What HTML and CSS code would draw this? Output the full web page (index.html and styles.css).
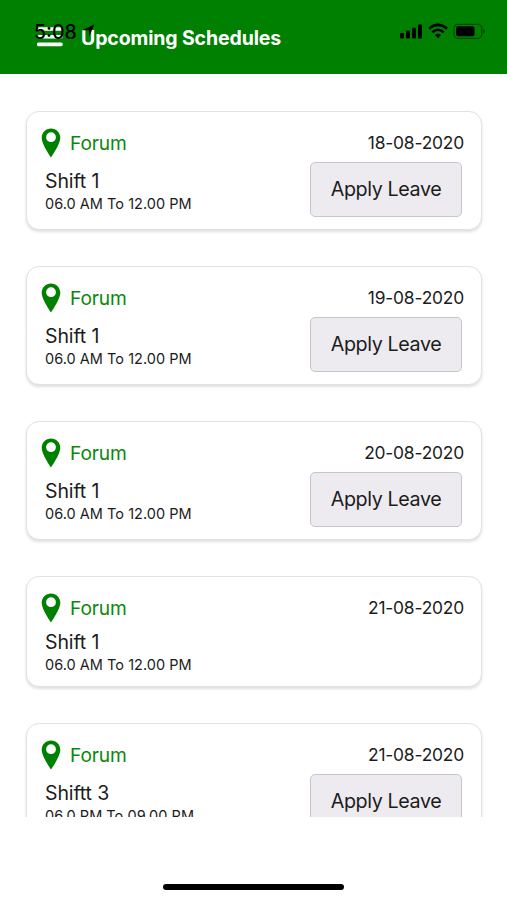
FILE: index.html
```html
<!DOCTYPE html>
<html lang="en">
<head>
<meta charset="utf-8">
<title>Upcoming Schedules</title>
<link rel="stylesheet" href="styles.css">
</head>
<body>
<svg class="symbols" width="0" height="0">
  <symbol id="pin" viewBox="0 0 20 30"><path fill-rule="evenodd" d="M10 0.5C4.8 0.5.7 4.6.7 9.8C.7 16.5 10 29.5 10 29.5S19.3 16.5 19.3 9.8C19.3 4.6 15.2.5 10 .5ZM10 4.3A4.9 4.9 0 1 1 10 14.1A4.9 4.9 0 1 1 10 4.3Z"/></symbol>
</svg>
<header class="header">
  <svg class="menu" width="26" height="20" viewBox="0 0 26 20"><path d="M1.5 2H24M1.5 9.7H24M1.5 17.4H24" stroke="#fff" stroke-width="3.6" stroke-linecap="round"/></svg>
  <h1 class="title">Upcoming Schedules</h1>
  <div class="status">
    <span class="clock">5:08</span>
    <svg class="arrow" width="14" height="14" viewBox="0 0 14 14"><path d="M13.3.5L8.2 12.5V6.2H1.2Z"/></svg>
    <svg class="signals" width="88" height="18" viewBox="0 0 88 18">
      <rect x="1" y="10" width="4" height="5.5" rx="1"/><rect x="7" y="7.6" width="4" height="7.9" rx="1"/><rect x="13" y="4.7" width="4" height="10.8" rx="1"/><rect x="19" y="1.4" width="4" height="14.1" rx="1"/>
      <g fill="none" stroke="#000" stroke-width="2.5"><path d="M30 5.7Q39 -1.9 48 5.7"/><path d="M33.3 9.2Q39 4.3 44.7 9.2"/></g>
      <path d="M36 12Q39 9.5 42 12L39 15.3Z"/>
      <rect x="54.8" y="1.3" width="28" height="14" rx="4" fill="none" stroke="#000" stroke-opacity=".4" stroke-width="1.2"/>
      <rect x="57" y="3.3" width="18.5" height="10" rx="2"/><path d="M84 5.8Q88 8.3 84 10.8Z" opacity=".45"/>
    </svg>
  </div>
</header>
<main class="list">
  <article class="card">
    <div class="top"><svg class="pin"><use href="#pin"/></svg><span class="place">Forum</span><time class="date">18-08-2020</time></div>
    <div class="details"><div class="shift"><div class="name">Shift 1</div><div class="hours">06.0 AM To 12.00 PM</div></div><button class="leave">Apply Leave</button></div>
  </article>
  <article class="card">
    <div class="top"><svg class="pin"><use href="#pin"/></svg><span class="place">Forum</span><time class="date">19-08-2020</time></div>
    <div class="details"><div class="shift"><div class="name">Shift 1</div><div class="hours">06.0 AM To 12.00 PM</div></div><button class="leave">Apply Leave</button></div>
  </article>
  <article class="card">
    <div class="top"><svg class="pin"><use href="#pin"/></svg><span class="place">Forum</span><time class="date">20-08-2020</time></div>
    <div class="details"><div class="shift"><div class="name">Shift 1</div><div class="hours">06.0 AM To 12.00 PM</div></div><button class="leave">Apply Leave</button></div>
  </article>
  <article class="card">
    <div class="top"><svg class="pin"><use href="#pin"/></svg><span class="place">Forum</span><time class="date">21-08-2020</time></div>
    <div class="details"><div class="shift"><div class="name">Shift 1</div><div class="hours">06.0 AM To 12.00 PM</div></div></div>
  </article>
  <article class="card">
    <div class="top"><svg class="pin"><use href="#pin"/></svg><span class="place">Forum</span><time class="date">21-08-2020</time></div>
    <div class="details"><div class="shift"><div class="name">Shiftt 3</div><div class="hours">06.0 PM To 09.00 PM</div></div><button class="leave">Apply Leave</button></div>
  </article>
</main>
<footer class="footer"><div class="home"></div></footer>
</body>
</html>
```
FILE: styles.css
```css
* { box-sizing: border-box; }
body {
  margin: 0;
  height: 900px;
  display: flex;
  flex-direction: column;
  overflow: hidden;
  background: #fff;
  color: #1c1c1c;
  font-family: Inter, "Liberation Sans", sans-serif;
}
svg { display: block; flex: none; }
.symbols { position: absolute; }
.header {
  position: relative;
  flex: none;
  display: flex;
  align-items: center;
  height: 74px;
  padding-left: 37px;
  background: #008000;
}
.title {
  margin: 2px 0 0 18px;
  font-size: 19.5px;
  line-height: 24px;
  font-weight: 650;
  letter-spacing: -.13px;
  color: #fff;
  white-space: nowrap;
}
.status {
  position: absolute;
  inset: 23px 20px auto 34px;
  display: flex;
  align-items: center;
  height: 18px;
  color: #000;
}
.clock { width: 42px; font-size: 19.5px; font-weight: 500; line-height: 18px; }
.arrow { margin: -2px 0 0 5px; }
.signals { margin-left: auto; }
.list {
  flex: none;
  height: 743px;
  padding: 37px 25px 0 26px;
  display: flex;
  flex-direction: column;
  gap: 36px;
  overflow: hidden;
}
.card {
  flex: none;
  padding: 15px 19px 12px 14px;
  border: 1px solid #e2e2e2;
  border-radius: 13px;
  background: #fff;
  box-shadow: 0 2px 3px rgba(0, 0, 0, .13);
}
.top { display: flex; align-items: center; height: 35px; padding-bottom: 3px; }
.pin { width: 20px; height: 30px; fill: #008000; }
.place { margin: -1px 0 0 9px; font-size: 19.2px; letter-spacing: -.15px; color: #0a880a; }
.date { margin: -2px -2px 0 auto; font-size: 17.4px; letter-spacing: -.2px; }
.details { display: flex; align-items: center; justify-content: space-between; padding-left: 4px; }
.shift { height: 47px; white-space: nowrap; }
.name { padding-top: 3px; font-size: 19.5px; line-height: 25px; letter-spacing: -.12px; }
.hours { font-size: 14.5px; line-height: 20px; letter-spacing: .03px; }
.leave {
  width: 152px;
  height: 55px;
  padding: 0 0 2px;
  border: 1px solid #c6c6ca;
  border-radius: 5px;
  background: #edebf0;
  color: #1c1c1c;
  font: 19.7px/24px Inter, "Liberation Sans", sans-serif;
  letter-spacing: -.4px;
}
.footer { flex: 1; display: flex; justify-content: center; align-items: flex-end; padding-bottom: 10px; }
.home { width: 181px; height: 6px; border-radius: 3px; background: #000; }
```
